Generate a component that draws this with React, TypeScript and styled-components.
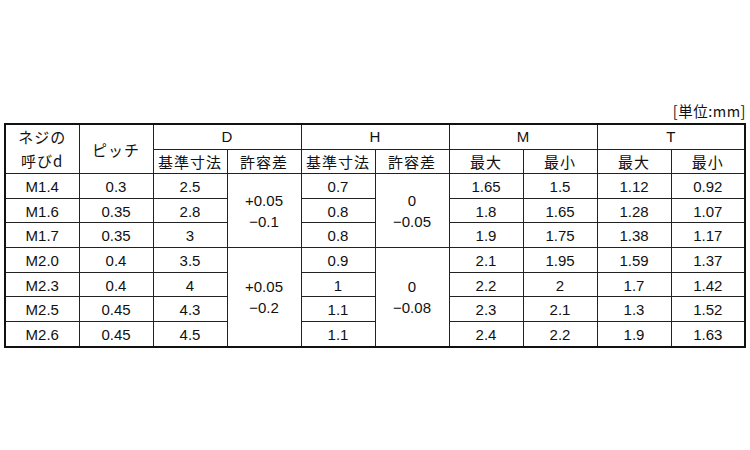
import React from 'react';
import styled, { createGlobalStyle } from 'styled-components';

const GlobalStyle = createGlobalStyle`
  body {
    margin: 0;
    background: #fff;
    color: #111;
    font-family: 'Liberation Sans', 'Noto Sans CJK JP', sans-serif;
  }
`;

type Row = {
  size: string;
  pitch: string;
  d: string;
  h: string;
  mMax: string;
  mMin: string;
  tMax: string;
  tMin: string;
};

const rows: Row[] = [
  { size: 'M1.4', pitch: '0.3', d: '2.5', h: '0.7', mMax: '1.65', mMin: '1.5', tMax: '1.12', tMin: '0.92' },
  { size: 'M1.6', pitch: '0.35', d: '2.8', h: '0.8', mMax: '1.8', mMin: '1.65', tMax: '1.28', tMin: '1.07' },
  { size: 'M1.7', pitch: '0.35', d: '3', h: '0.8', mMax: '1.9', mMin: '1.75', tMax: '1.38', tMin: '1.17' },
  { size: 'M2.0', pitch: '0.4', d: '3.5', h: '0.9', mMax: '2.1', mMin: '1.95', tMax: '1.59', tMin: '1.37' },
  { size: 'M2.3', pitch: '0.4', d: '4', h: '1', mMax: '2.2', mMin: '2', tMax: '1.7', tMin: '1.42' },
  { size: 'M2.5', pitch: '0.45', d: '4.3', h: '1.1', mMax: '2.3', mMin: '2.1', tMax: '1.3', tMin: '1.52' },
  { size: 'M2.6', pitch: '0.45', d: '4.5', h: '1.1', mMax: '2.4', mMin: '2.2', tMax: '1.9', tMin: '1.63' },
];

// tolerance groups: first row index -> rowspan, D tol, H tol
const groups: Record<number, { span: number; d: [string, string]; h: [string, string] }> = {
  0: { span: 3, d: ['+0.05', '−0.1'], h: ['0', '−0.05'] },
  3: { span: 4, d: ['+0.05', '−0.2'], h: ['0', '−0.08'] },
};

const App = (): JSX.Element => {
  return (
    <Page>
      <GlobalStyle />
      <Unit>[単位:mm]</Unit>
      <SpecTable>
        <colgroup>
          {Array.from({ length: 10 }).map((_, i) => (
            <col key={i} />
          ))}
        </colgroup>
        <thead>
          <tr>
            <HeadCell rowSpan={2}>
              <Stack>
                <span>ネジの</span>
                <span>呼びd</span>
              </Stack>
            </HeadCell>
            <HeadCell rowSpan={2}>ピッチ</HeadCell>
            <HeadCell colSpan={2} latin>D</HeadCell>
            <HeadCell colSpan={2} latin>H</HeadCell>
            <HeadCell colSpan={2} latin>M</HeadCell>
            <HeadCell colSpan={2} latin>T</HeadCell>
          </tr>
          <tr>
            <HeadCell>基準寸法</HeadCell>
            <HeadCell>許容差</HeadCell>
            <HeadCell>基準寸法</HeadCell>
            <HeadCell>許容差</HeadCell>
            <HeadCell>最大</HeadCell>
            <HeadCell>最小</HeadCell>
            <HeadCell>最大</HeadCell>
            <HeadCell>最小</HeadCell>
          </tr>
        </thead>
        <tbody>
          {rows.map((row, i) => {
            const g = groups[i];
            return (
              <tr key={row.size}>
                <Cell>{row.size}</Cell>
                <Cell>{row.pitch}</Cell>
                <Cell>{row.d}</Cell>
                {g && (
                  <Cell rowSpan={g.span}>
                    <Stack tight>
                      <span>{g.d[0]}</span>
                      <span>{g.d[1]}</span>
                    </Stack>
                  </Cell>
                )}
                <Cell>{row.h}</Cell>
                {g && (
                  <Cell rowSpan={g.span}>
                    <Stack tight>
                      <span>{g.h[0]}</span>
                      <span>{g.h[1]}</span>
                    </Stack>
                  </Cell>
                )}
                <Cell>{row.mMax}</Cell>
                <Cell>{row.mMin}</Cell>
                <Cell>{row.tMax}</Cell>
                <Cell>{row.tMin}</Cell>
              </tr>
            );
          })}
        </tbody>
      </SpecTable>
    </Page>
  );
};

export default App;

const Page = styled.div`
  width: 742px;
  padding: 96px 0 0 4px;
`;

const Unit = styled.div`
  height: 20px;
  line-height: 20px;
  padding-top: 5px;
  margin-bottom: 2px;
  text-align: right;
  font-family: 'Noto Sans CJK JP', sans-serif;
  font-size: 14.5px;
  letter-spacing: 0.5px;
`;

const SpecTable = styled.table`
  width: 742px;
  table-layout: fixed;
  border-collapse: collapse;
  border: 2px solid #111;
  col {
    width: 10%;
  }
`;

const HeadCell = styled.td<{ latin?: boolean }>`
  height: 23px;
  padding: 0;
  border: 1px solid #222;
  text-align: center;
  vertical-align: middle;
  font-family: ${(p) =>
    p.latin ? "'Liberation Sans', sans-serif" : "'Noto Sans CJK JP', sans-serif"};
  font-size: 15px;
  letter-spacing: ${(p) => (p.latin ? '0' : '1px')};
  font-weight: 400;
`;

const Cell = styled.td`
  height: 22.7px;
  padding: 1px 0 0;
  border: 1px solid #222;
  text-align: center;
  vertical-align: middle;
  font-size: 15px;
`;

const Stack = styled.div<{ tight?: boolean }>`
  display: flex;
  flex-direction: column;
  align-items: center;
  line-height: ${(p) => (p.tight ? '21px' : '24px')};
`;
